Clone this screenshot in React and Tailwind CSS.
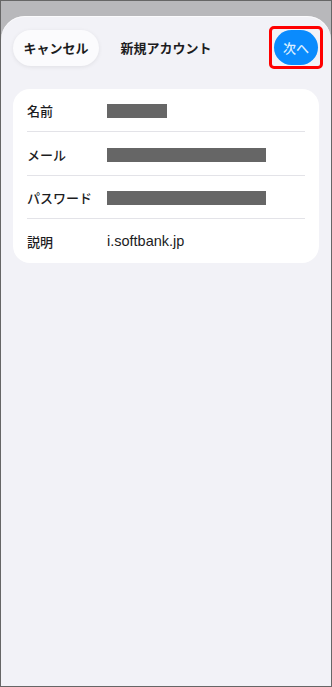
import React from "react";

const jp = { fontFamily: '"Noto Sans CJK JP", "Noto Sans", sans-serif' };

function Row({ label, children, last }) {
  return (
    <div className={"h-[43.5px] flex items-center pt-[2px] " + (last ? "" : "border-b border-[#e3e3e8]")}>
      <div className="w-[80px] text-[13px] font-medium text-[#1c1c1e] leading-none" style={jp}>{label}</div>
      <div className="flex-1 flex items-center">{children}</div>
    </div>
  );
}

export default function App() {
  return (
    <div className="w-[332px] h-[687px] border border-[#666666] bg-[#b8b8bb] flex flex-col overflow-hidden" style={jp}>
      <div className="h-[15px] shrink-0" />
      <div className="flex-1 bg-[#f2f2f7] rounded-t-[24px] flex flex-col shadow-[inset_0_1px_0_rgba(255,255,255,0.7)]">
        <div className="grid grid-cols-[1fr_auto_1fr] items-center px-[12px] pt-[13.5px]">
          <div className="justify-self-start">
            <div className="h-[36px] w-[86px] rounded-full bg-[#fbfbfd] shadow-[0_1px_4px_rgba(0,0,0,0.08)] flex items-center justify-center text-[13px] font-bold text-[#1c1c1e]">
              キャンセル
            </div>
          </div>
          <div className="text-[13px] font-bold text-[#1c1c1e] text-center">新規アカウント</div>
          <div className="justify-self-end relative mr-px">
            <div className="h-[35px] w-[44px] rounded-full bg-[#0a8bfd] flex items-center justify-center text-[13px] font-medium text-[#dbeeff]">
              次へ
            </div>
            <div className="absolute -left-[5px] -right-[5px] -top-[4px] -bottom-[4px] border-[3px] border-[#ff0000] rounded-[5px]" />
          </div>
        </div>
        <div className="mx-[12px] mt-[23px] bg-white rounded-[17px] px-[14px]">
          <Row label="名前">
            <div className="w-[60px] h-[14px] mt-[1px] bg-[#666666]" />
          </Row>
          <Row label="メール">
            <div className="w-[159px] h-[14px] mt-[1px] bg-[#666666]" />
          </Row>
          <Row label="パスワード">
            <div className="w-[159px] h-[14px] mt-[1px] bg-[#666666]" />
          </Row>
          <Row label="説明" last>
            <span className="text-[14.5px] text-[#1c1c1e]" style={{ fontFamily: '"Liberation Sans", Arial, sans-serif' }}>
              i.softbank.jp
            </span>
          </Row>
        </div>
      </div>
    </div>
  );
}
